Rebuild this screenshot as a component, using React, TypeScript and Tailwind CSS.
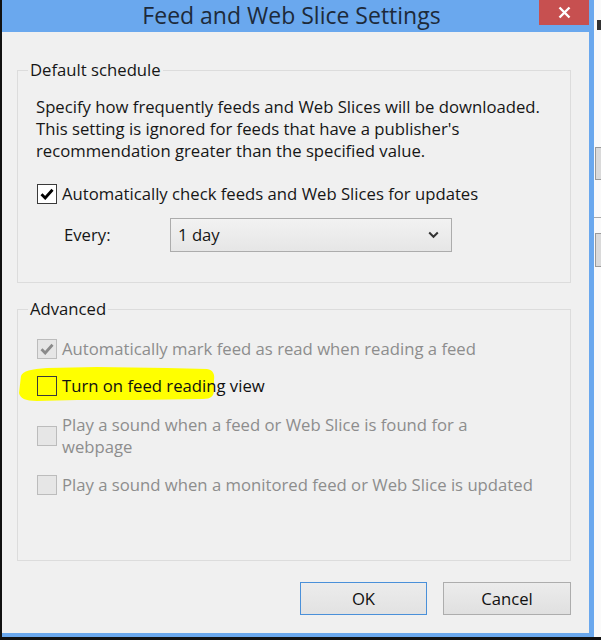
import React from "react";

function Check({ color }: { color: string }) {
  return (
    <svg width="14" height="12" viewBox="0 0 14 12">
      <path d="M1.5 6.2 L5.2 10 L12.5 1.8" fill="none" stroke={color} strokeWidth="2.8" strokeLinejoin="miter" />
    </svg>
  );
}

function Box({ checked, disabled, transparent }: { checked?: boolean; disabled?: boolean; transparent?: boolean }) {
  const cls = disabled
    ? "border-[#bcbcbc] bg-[#e6e6e6]"
    : transparent
    ? "border-[#3a3a3a] bg-transparent"
    : "border-[#3a3a3a] bg-white";
  return (
    <div className={`w-[20px] h-[20px] border ${cls} flex items-center justify-center shrink-0`}>
      {checked ? <Check color={disabled ? "#8a8a8a" : "#000"} /> : null}
    </div>
  );
}

export default function App() {
  const font = { fontFamily: '"Open Sans", "Noto Sans", sans-serif' };
  return (
    <div className="w-[601px] h-[640px] flex flex-col bg-[#111] overflow-hidden" style={font}>
      <div className="flex h-[637px]">
        <div className="w-[2px] bg-[#111]" />
        <div className="w-[592px] flex flex-col bg-[#6aa8ee]">
          {/* title bar */}
          <div className="h-[32px] flex">
            <div className="flex-1 flex items-start justify-center pl-[42px] text-[23px] text-[#1d2a3a]">
              <span className="leading-[31px] h-[31px]">Feed and Web Slice Settings</span>
            </div>
            <div className="w-[50px] h-[25px] bg-[#c75050] flex items-center justify-center">
              <svg width="13" height="13" viewBox="0 0 13 13">
                <path d="M1.5 1.5 L11.5 11.5 M11.5 1.5 L1.5 11.5" stroke="#fff" strokeWidth="2.4" />
              </svg>
            </div>
            <div className="w-[5px]" />
          </div>
          <div className="flex h-[601px]">
            <div className="w-[587px] bg-[#f0f0f0] flex flex-col pl-[15px] text-[16.7px] text-[#161616]">
              {/* Group 1 */}
              <fieldset className="mt-[27px] w-[554px] border border-[#dcdcdc] m-0 p-0">
                <legend className="ml-[10px] px-[2px] leading-[22px]">Default schedule</legend>
                <div className="pl-[18px] pt-[15px] pb-[30px] flex flex-col">
                  <p className="leading-[22px]">
                    Specify how frequently feeds and Web Slices will be downloaded.
                    <br />
                    This setting is ignored for feeds that have a publisher&apos;s
                    <br />
                    recommendation greater than the specified value.
                  </p>
                  <div className="mt-[21px] flex items-center h-[22px] ml-[1px] gap-[5px]">
                    <Box checked />
                    <span className="leading-[22px]">Automatically check feeds and Web Slices for updates</span>
                  </div>
                  <div className="mt-[13px] flex items-center h-[34px]">
                    <span className="ml-[28px] w-[106px]">Every:</span>
                    <div className="w-[282px] h-[34px] border border-[#acacac] bg-gradient-to-b from-[#f2f2f2] to-[#e6e6e6] flex items-center justify-between pl-[7px] pr-[12px]">
                      <span>1 day</span>
                      <svg width="11" height="8" viewBox="0 0 11 8">
                        <path d="M1.2 1.5 L5.5 5.8 L9.8 1.5" fill="none" stroke="#333" strokeWidth="2" />
                      </svg>
                    </div>
                  </div>
                </div>
              </fieldset>
              {/* Group 2 */}
              <fieldset className="mt-[15px] w-[554px] border border-[#dcdcdc] m-0 p-0">
                <legend className="ml-[10px] px-[2px] leading-[22px]">Advanced</legend>
                <div className="pl-[19px] pt-[18px] pb-[64px] flex flex-col">
                  <div className="flex items-center h-[22px] gap-[5px] text-[#8d8d8d]">
                    <Box checked disabled />
                    <span>Automatically mark feed as read when reading a feed</span>
                  </div>
                  <div className="relative mt-[15px] flex items-center h-[22px] gap-[5px]">
                    <svg className="absolute left-[-20px] top-[-9px]" width="200" height="36" viewBox="0 0 200 36">
                      <path
                        d="M4 10 C6 5 14 3 30 2 L80 1 L150 2 L190 3 C196 4 198 8 197 14 L197 24 C197 30 194 33 186 33 L120 34 L60 34 L20 35 C8 35 3 32 2 27 Z"
                        fill="#ffff00"
                      />
                    </svg>
                    <div className="relative flex items-center gap-[5px]">
                      <Box transparent />
                      <span className="text-[#111]">Turn on feed reading view</span>
                    </div>
                  </div>
                  <div className="mt-[17px] flex items-center gap-[5px] text-[#8d8d8d]">
                    <Box disabled />
                    <span className="leading-[22px]">
                      Play a sound when a feed or Web Slice is found for a
                      <br />
                      webpage
                    </span>
                  </div>
                  <div className="mt-[16px] flex items-center h-[22px] gap-[5px] text-[#8d8d8d]">
                    <Box disabled />
                    <span>Play a sound when a monitored feed or Web Slice is updated</span>
                  </div>
                </div>
              </fieldset>
              {/* Buttons */}
              <div className="mt-[21px] w-[554px] flex justify-end gap-[16px]">
                <button className="w-[127px] h-[33px] border border-[#4a90d9] bg-gradient-to-b from-[#ececec] to-[#e2e2e2] text-[#111]">
                  OK
                </button>
                <button className="w-[128px] h-[33px] border border-[#adadad] bg-gradient-to-b from-[#ececec] to-[#e0e0e0] text-[#111]">
                  Cancel
                </button>
              </div>
            </div>
            <div className="w-[5px] bg-[#6aa8ee]" />
          </div>
          <div className="h-[4px] bg-[#6aa8ee]" />
        </div>
        {/* background window strip */}
        <div className="w-[7px] bg-[#fafafa] flex flex-col">
          <div className="h-[20px]" />
          <div className="h-[10px] ml-[3px] bg-[#333]" />
          <div className="h-[117px]" />
          <div className="h-[33px] ml-[1px] bg-[#dadada] border-l border-y border-[#9a9a9a]" />
          <div className="h-[37px]" />
          <div className="h-[1px] bg-[#aaa]" />
          <div className="h-[15px]" />
          <div className="h-[34px] ml-[1px] bg-[#dadada] border-l border-y border-[#9a9a9a]" />
        </div>
      </div>
      <div className="h-[3px] bg-[#111]" />
    </div>
  );
}
